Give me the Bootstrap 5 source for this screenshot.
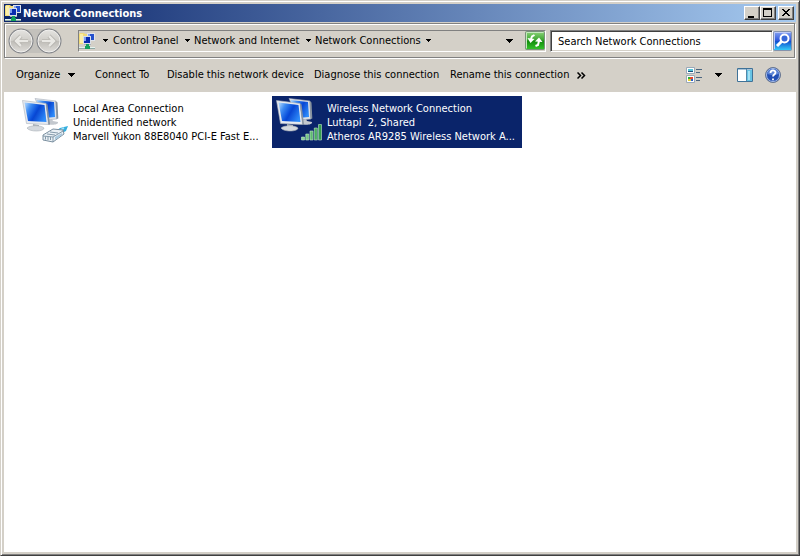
<!DOCTYPE html>
<html lang="en">
<head>
<meta charset="utf-8">
<meta name="viewport" content="width=device-width, initial-scale=1">
<title>Network Connections</title>
<link href="https://cdn.jsdelivr.net/npm/bootstrap@5.3.0/dist/css/bootstrap.min.css" rel="stylesheet">
<style>
:root{--face:#d4d0c8;--shade:#808080;--dark:#404040;--navy:#0a246a}
body{font-family:"DejaVu Sans Condensed","DejaVu Sans",sans-serif;font-size:11px;line-height:14px;color:#000;background:var(--face)}
svg{display:block;flex:none}
.window-frame{background:var(--face);border:1px solid;border-color:var(--face) var(--dark) var(--dark) var(--face);box-shadow:inset 1px 1px 0 #fff,inset -1px -1px 0 var(--shade);padding:3px}
.title-strip{height:18px;padding:0 2px 0 1px;background:linear-gradient(90deg,#0a246a,#a6caf0);color:#fff}
.title-strip h1{font-size:11px;line-height:18px;font-weight:700;padding:1px 0 0 2px}
.cap-btn{width:16px;height:14px;border:1px solid;border-color:#fff var(--dark) var(--dark) #fff;box-shadow:inset -1px -1px 0 var(--shade);background:var(--face)}
.cap-close{margin-left:2px}
.nav-band{height:35px;margin:1px 1px 0 0;padding:0 1px 0 3px;border:1px solid var(--shade);box-shadow:inset 1px 1px 0 #fff,1px 1px 0 #fff}
.address-box{height:22px;border:1px solid;border-color:var(--shade) #fff #fff var(--shade);margin-left:14px}
.plain{border:0;padding:0;background:transparent;color:#000;white-space:nowrap;text-align:left}
.crumb{color:#000;text-decoration:none;white-space:nowrap}
.crumb-gap{margin:0 5px 0 8px}
.w-a{width:81px}.w-b{width:121px}.w-c{width:116px}
.search-field{width:223px;height:22px;margin-left:4px;border:1px solid;border-color:var(--shade) #fff #fff var(--shade);box-shadow:inset 1px 1px 0 var(--dark),inset -1px -1px 0 var(--face);border-radius:0;padding:1px 7px 0;background:#fff;color:#000}
.search-field::placeholder{color:#000;opacity:1}
.command-bar{height:34px;padding:0 15px 0 12px}
.c1{width:79px}.c2{width:72px}.c3{width:147px}.c4{width:136px}.c5{width:127px}
.view-arrow{padding:0 15px 0 13px}
.pane{background:#fff;padding:4px 14px;gap:4px}
.tile{width:250px;height:52px;padding:2px 4px;gap:3px;color:#000;text-decoration:none}
.tile-text{white-space:pre;padding-top:4px}
.tile.chosen{background:var(--navy);color:#fff}
</style>
<script src="https://cdn.jsdelivr.net/npm/bootstrap@5.3.0/dist/js/bootstrap.bundle.min.js" defer></script>
</head>
<body>
<svg width="0" height="0" class="position-absolute" aria-hidden="true">
 <defs>
  <linearGradient id="scr" x1="0" y1=".2" x2="1" y2=".7"><stop offset="0" stop-color="#9ccafb"/><stop offset=".22" stop-color="#3d8bf2"/><stop offset=".5" stop-color="#0a50dc"/><stop offset=".56" stop-color="#0846d2"/><stop offset="1" stop-color="#2f8cfa"/></linearGradient>
  <linearGradient id="orb" x1="0" y1="0" x2="0" y2="1"><stop offset="0" stop-color="#e4e3e0"/><stop offset=".48" stop-color="#cfcdc8"/><stop offset=".52" stop-color="#bfbdb8"/><stop offset="1" stop-color="#dedcd8"/></linearGradient>
  <linearGradient id="grn" x1="0" y1="0" x2="0" y2="1"><stop offset="0" stop-color="#8ed47c"/><stop offset=".48" stop-color="#39a52e"/><stop offset=".52" stop-color="#118a0c"/><stop offset="1" stop-color="#35c52b"/></linearGradient>
  <linearGradient id="blu" x1="0" y1="0" x2="0" y2="1"><stop offset="0" stop-color="#8aa5f2"/><stop offset=".48" stop-color="#2b55dc"/><stop offset=".52" stop-color="#0f50cf"/><stop offset="1" stop-color="#36d0fa"/></linearGradient>
  <linearGradient id="bar" x1="0" y1="0" x2="1" y2="0"><stop offset="0" stop-color="#8fd69a"/><stop offset="1" stop-color="#2e9c48"/></linearGradient>
  <symbol id="net" viewBox="0 0 16 16">
   <path d="M0 1l1-1h4l1 1h3v10H0z" fill="#f3dc78"/><path d="M1 1h3v9H1z" fill="#fbefaa"/>
   <path d="M8 0h8v8H8z" fill="#dfe3ec"/><path d="M9 1h6v6H9z" fill="#2450cc"/><path d="M9 1h2v3H9z" fill="#86a6f0"/>
   <path d="M4 3h8v8H4z" fill="#d9dfe8"/><path d="M5 4h6v6H5z" fill="#0a2cb0"/><path d="M5 4h2v4H5z" fill="#7f9ff0"/>
   <path d="M5 11h7v1H5z" fill="#aab0b8"/><path d="M7 11h3v2h1v3H6v-3h1z" fill="#12a05c"/><path d="M0 14h6v1H0zM11 14h5v1h-5z" fill="#e4f2ee"/><path d="M0 15h6v1H0zM11 15h5v1h-5z" fill="#8fa8a4"/>
  </symbol>
  <symbol id="screens" viewBox="0 0 48 48">
   <path d="M25 22l5-1 1 2 5 1c1 3-9 4-11 1z" fill="#c3c8ce"/>
   <path d="M13 .5l21 2.500 1 18-12 1z" fill="#dde1e7" stroke="#a9b2bd" stroke-width=".6"/><path d="M14.500 2l17.500 2 1 15-11 1z" fill="url(#scr)"/><path d="M33.500 3l2 1.500.8 16-1.800.5z" fill="#87929f"/>
   <path d="M11 26l6 1v3H11z" fill="#a9b0b8"/><path d="M5 30c3-3 14-3 17 0 0 4-15 4-17 0z" fill="#d5d9de" stroke="#aab0b7" stroke-width=".6"/>
   <path d="M.5 2.500L24 5.500l2.500 21L4.500 25.500z" fill="#e7eaef" stroke="#a9b2bd" stroke-width=".6"/><path d="M2.500 4.500L22.500 7l2 17-18.500-1z" fill="url(#scr)"/><path d="M24 5.500l1.500 1 2.500 20-1.500.5z" fill="#87929f"/>
  </symbol>
  <symbol id="drop" viewBox="0 0 7 4"><path d="M0 0h7v1H6v1H5v1H4v1H3V3H2V2H1V1H0z"/></symbol>
  <symbol id="drop-s" viewBox="0 0 5 3"><path d="M0 0h5v1H4v1H3v1H2V2H1V1H0z"/></symbol>
 </defs>
</svg>
<div class="window-frame d-flex flex-column min-vh-100">
 <header class="title-strip d-flex align-items-center">
  <svg width="16" height="16" aria-hidden="true"><use href="#net"/></svg>
  <h1 class="m-0 flex-grow-1">Network Connections</h1>
  <button class="cap-btn p-0" aria-label="Minimize"><svg width="14" height="12"><path d="M3 9h6v2H3z"/></svg></button>
  <button class="cap-btn p-0" aria-label="Maximize"><svg width="14" height="12"><path d="M2 1h9v9H2zM3 3v6h7V3z" fill-rule="evenodd"/></svg></button>
  <button class="cap-btn cap-close p-0" aria-label="Close"><svg width="14" height="12"><path d="M3 2h2v1h1v1h2V3h1V2h2v1h-1v1H9v1H8v1h1v1h1v1h1v1H9V8H8V7H6v1H5v1H3V8h1V7h1V6h1V5H5V4H4V3H3z"/></svg></button>
 </header>
 <nav class="nav-band d-flex align-items-center" aria-label="Address">
  <div class="d-flex position-relative">
   <svg width="56" height="28" viewBox="0 0 56 28" aria-hidden="true"><path d="M14 2h27v24H14z" fill="#c3c1bc"/><circle cx="13" cy="14" r="12.500" fill="#85878b"/><circle cx="41" cy="14" r="12.500" fill="#85878b"/><circle cx="13" cy="14" r="11" fill="url(#orb)" stroke="#f2f1ef"/><circle cx="41" cy="14" r="11" fill="url(#orb)" stroke="#f2f1ef"/><path d="M20 14H8M13 9l-5 5 5 5M34 14h12M41 9l5 5-5 5" fill="none" stroke="#b1afaa" stroke-width="4"/><path d="M20 14H8M13 9l-5 5 5 5M34 14h12M41 9l5 5-5 5" fill="none" stroke="#e9e8e4" stroke-width="2.500"/></svg>
   <div class="position-absolute top-0 start-0 w-100 h-100 d-flex"><button class="plain w-50" aria-label="Back"></button><button class="plain w-50" aria-label="Forward"></button></div>
  </div>
  <div class="address-box d-flex align-items-center flex-grow-1">
   <svg width="16" height="16" aria-hidden="true"><use href="#net"/></svg>
   <svg width="5" height="3" class="crumb-gap" aria-hidden="true"><use href="#drop-s"/></svg>
   <a class="crumb w-a d-flex align-items-center" href="#">Control Panel<svg width="5" height="3" class="ms-auto me-1"><use href="#drop-s"/></svg></a>
   <a class="crumb w-b d-flex align-items-center" href="#">Network and Internet<svg width="5" height="3" class="ms-auto me-1"><use href="#drop-s"/></svg></a>
   <a class="crumb w-c d-flex align-items-center" href="#">Network Connections<svg width="5" height="3" class="ms-auto"><use href="#drop-s"/></svg></a>
   <button class="plain ms-auto me-2 pe-1" aria-label="Previous locations"><svg width="7" height="4"><use href="#drop"/></svg></button>
   <button class="plain" aria-label="Refresh"><svg width="20" height="20" viewBox="0 0 20 20"><rect x=".5" y=".5" width="19" height="18" rx="1" fill="url(#grn)" stroke="#78927a"/><path d="M1.500 17.500v-16h17" fill="none" stroke="#c4e9bd"/><path d="M9.500 4L7 5.500 6 8M10.500 15l2.500-1 1-4" fill="none" stroke="#fff" stroke-width="2"/><path d="M2.500 7l7 1-4 4zM10 10.500L14 6.500l3.500 4.500z" fill="#fff"/></svg></button>
  </div>
  <input class="search-field" type="search" aria-label="Search Network Connections" placeholder="Search Network Connections">
  <button class="plain" aria-label="Search"><svg width="20" height="20" viewBox="0 0 20 20"><rect x=".5" y=".5" width="18" height="19" rx="1" fill="url(#blu)" stroke="#8492ac"/><path d="M1.500 18v-16.500h16" fill="none" stroke="#bdcaf8"/><circle cx="11.500" cy="7.500" r="4" fill="#3768d8" stroke="#fff" stroke-width="2"/><path d="M8.500 10.500L4 15" stroke="#fff" stroke-width="3"/></svg></button>
 </nav>
 <div class="command-bar d-flex align-items-center" role="toolbar" aria-label="Commands">
  <button class="plain c1 d-flex align-items-center">Organize<svg width="7" height="4" class="ms-2"><use href="#drop"/></svg></button>
  <button class="plain c2">Connect To</button>
  <button class="plain c3">Disable this network device</button>
  <button class="plain c4">Diagnose this connection</button>
  <button class="plain c5">Rename this connection</button>
  <button class="plain" aria-label="More commands"><svg width="9" height="7" viewBox="0 0 9 7"><path d="M.5.500l3 3-3 3M4.500.500l3 3-3 3" fill="none" stroke="#000" stroke-width="1.500"/></svg></button>
  <div class="d-flex align-items-center ms-auto">
   <button class="plain" aria-label="Change view"><svg width="16" height="16" viewBox="0 0 16 16"><path d="M.5.500h8v6h-8zM.5 8.500h8v7h-8z" fill="#fff" stroke="#9aa9b8"/><path d="M2 2h5v3H2z" fill="#54c4d8"/><path d="M2 4h5v1H2z" fill="#174f7c"/><path d="M2 10h2v2H2z" fill="#2cae38"/><path d="M4 10h3v2H4z" fill="#e34a2e"/><path d="M2 12h3v2H2z" fill="#ead02c"/><path d="M5 12h2v2H5z" fill="#275bd0"/><path d="M10 2h6v1h-6zM10 5h4v1h-4zM10 10h6v1h-6zM10 13h4v1h-4z" fill="#4b6580"/></svg></button>
   <button class="plain view-arrow" aria-label="View options"><svg width="7" height="4"><use href="#drop"/></svg></button>
   <button class="plain me-2 pe-1" aria-label="Preview pane"><svg width="16" height="14" viewBox="0 0 16 14"><path d="M.5.500h15v13H.5z" fill="#fff" stroke="#3f7298"/><path d="M1 1h14v1H1z" fill="#a9c3d8"/><path d="M10 2h5v11h-5z" fill="#68c4e4"/><path d="M11 3h2v9h-2z" fill="#a6e2f4"/><path d="M9 1h1v12H9z" fill="#5588a8"/></svg></button>
   <button class="plain" aria-label="Help"><svg width="16" height="16" viewBox="0 0 16 16"><circle cx="8" cy="8" r="7.500" fill="#224fb4" stroke="#6a7890"/><circle cx="8" cy="8" r="6.500" fill="none" stroke="#a9bfe8"/><path d="M2.500 7a5.500 5 0 0 1 11 0q-5 2-11 0" fill="#5f87d8"/><path d="M5.500 6c0-3.400 5-3.400 5-.4 0 2-2.500 1.900-2.500 4M8 11.500v1.700" fill="none" stroke="#fff" stroke-width="1.800"/></svg></button>
  </div>
 </div>
 <main class="pane flex-grow-1 d-flex flex-wrap align-content-start">
  <a class="tile d-flex" href="#">
   <svg width="48" height="48" viewBox="0 0 48 48" aria-hidden="true"><use href="#screens"/><path d="M46 28l-8 2-4 3 4 3 6-3z" fill="#35aede"/><path d="M42 30l-5 3" stroke="#a5e0f4" stroke-width="1.500"/><path d="M21 37l10-6 10 1 1 4-11 8-10-2z" fill="#eaf0f5" stroke="#6d8395" stroke-width=".9"/><path d="M21 38l10 1v5M31 39l10-6M25 36l8 1M28 34l8 1M23.500 38.500v3M26 39v3M28.500 39v3" fill="none" stroke="#7890a2" stroke-width=".9"/><path d="M33 39l7-4v2l-7 5z" fill="#a9c9de"/></svg>
   <span class="tile-text">Local Area Connection
Unidentified network
Marvell Yukon 88E8040 PCI-E Fast E...</span>
  </a>
  <a class="tile chosen d-flex" href="#" aria-current="true">
   <svg width="48" height="48" viewBox="0 0 48 48" aria-hidden="true"><use href="#screens"/><g fill="url(#bar)" stroke="#c0e8c6" stroke-width=".6"><path d="M25.500 39h3v3h-3zM29.800 36h3v6h-3zM34 33h3v9h-3zM38.300 30h3v12h-3zM42.500 26.500h3v15.500h-3z"/></g></svg>
   <span class="tile-text">Wireless Network Connection
Luttapi  2, Shared
Atheros AR9285 Wireless Network A...</span>
  </a>
 </main>
</div>
</body>
</html>
